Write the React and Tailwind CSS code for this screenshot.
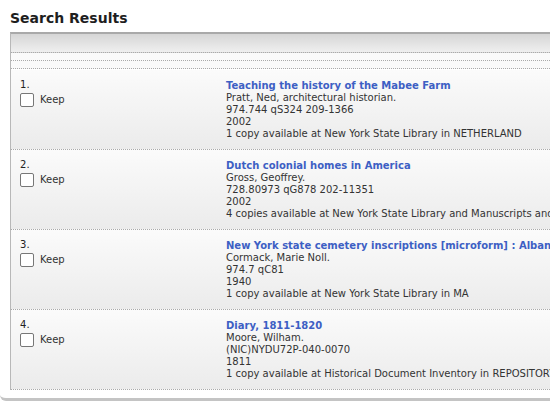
import React from "react";

const results = [
  {
    n: 1,
    title: "Teaching the history of the Mabee Farm",
    author: "Pratt, Ned, architectural historian.",
    call: "974.744 qS324 209-1366",
    year: "2002",
    avail: "1 copy available at New York State Library in NETHERLAND",
  },
  {
    n: 2,
    title: "Dutch colonial homes in America",
    author: "Gross, Geoffrey.",
    call: "728.80973 qG878 202-11351",
    year: "2002",
    avail: "4 copies available at New York State Library and Manuscripts and Special Collections",
  },
  {
    n: 3,
    title: "New York state cemetery inscriptions [microform] : Albany County",
    author: "Cormack, Marie Noll.",
    call: "974.7 qC81",
    year: "1940",
    avail: "1 copy available at New York State Library in MA",
  },
  {
    n: 4,
    title: "Diary, 1811-1820",
    author: "Moore, Wilham.",
    call: "(NIC)NYDU72P-040-0070",
    year: "1811",
    avail: "1 copy available at Historical Document Inventory in REPOSITORY",
  },
];

function ResultRow({ item }) {
  return (
    <div className="flex h-[80px] border-b border-dotted border-[#aaa] bg-gradient-to-b from-[#fbfbfb] to-[#ebebeb]">
      <div className="w-[215px] shrink-0 pl-[9px] pt-[9px]">
        <div className="leading-[12px] text-[#222]">{item.n}.</div>
        <label className="flex items-center gap-[6px] mt-[1px]">
          <span className="w-[14px] h-[14px] rounded-[2px] border border-[#777] bg-white" />
          <span className="text-[#333]">Keep</span>
        </label>
      </div>
      <div className="pt-[10px] leading-[12px] text-[#333] whitespace-nowrap">
        <div className="font-bold text-[#3d5fc4]">{item.title}</div>
        <div>{item.author}</div>
        <div>{item.call}</div>
        <div>{item.year}</div>
        <div>{item.avail}</div>
      </div>
    </div>
  );
}

export default function App() {
  return (
    <div
      className="w-[550px] h-[404px] overflow-hidden bg-white text-[10px]"
      style={{ fontFamily: '"DejaVu Sans", Verdana, sans-serif' }}
    >
      <div className="rounded-bl-[6px] border-b-[3px] border-[#c4c4c4] pb-[8px] w-[700px]">
        <h1 className="px-[10px] pt-[9px] pb-[5px] text-[14px] leading-[18px] font-bold text-[#1e1e1e]">
          Search Results
        </h1>
        <div className="ml-[10px] border-l border-t-2 border-l-[#b8b8b8] border-t-[#a9a9a9]">
          <div className="h-[19px] bg-gradient-to-b from-[#d6d6d6] to-[#efefef] border-b border-dotted border-[#aaa]" />
          <div className="h-[8px] bg-[#fafafa] border-b border-dotted border-[#aaa]" />
          <div className="h-[8px] bg-[#fafafa] border-b border-dotted border-[#aaa]" />
          <div className="h-[1px] bg-white" />
          {results.map((r) => (
            <ResultRow key={r.n} item={r} />
          ))}
        </div>
      </div>
    </div>
  );
}
